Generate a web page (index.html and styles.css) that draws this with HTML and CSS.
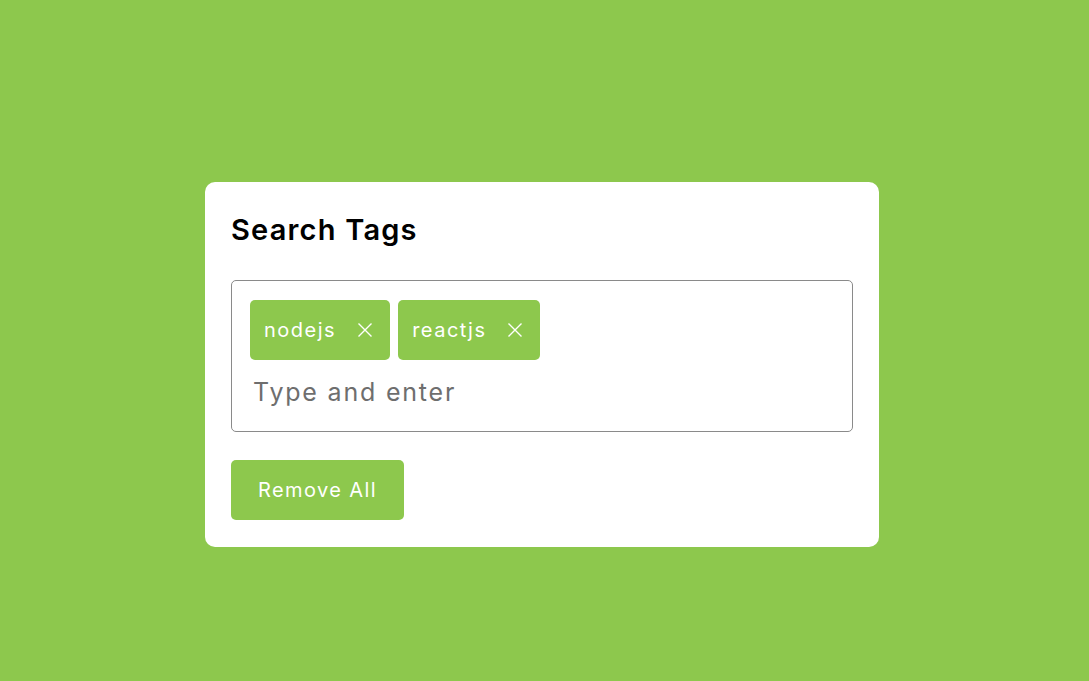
FILE: index.html
```html
<!DOCTYPE html>
<html>
<head>
<meta charset="utf-8">
<link rel="stylesheet" href="styles.css">
</head>
<body>
<div class="card">
  <h2 class="title">Search Tags</h2>
  <div class="tag-box">
    <ul class="tags">
      <li class="tag"><span>nodejs</span><svg class="x" viewBox="0 0 16 16"><path d="M1.5 1.5L14.5 14.5M14.5 1.5L1.5 14.5"/></svg></li>
      <li class="tag"><span>reactjs</span><svg class="x" viewBox="0 0 16 16"><path d="M1.5 1.5L14.5 14.5M14.5 1.5L1.5 14.5"/></svg></li>
    </ul>
    <input class="entry" type="text" placeholder="Type and enter">
  </div>
  <button class="btn">Remove All</button>
</div>
</body>
</html>
```
FILE: styles.css
```css
* { box-sizing: border-box; }
html, body { margin: 0; height: 100%; }
body {
  background: #8dc84d;
  font-family: Inter, "Open Sans", sans-serif;
  display: flex;
  justify-content: center;
  align-items: flex-start;
  padding-top: 182px;
  padding-right: 5px;
}
.card {
  width: 674px;
  background: #fff;
  border-radius: 10px;
  padding: 26px 26px 27px;
}
.title {
  margin: 0;
  font-size: 29px;
  font-weight: 600;
  color: #000;
  line-height: 44px;
  letter-spacing: 1.2px;
}
.tag-box {
  margin-top: 28px;
  border: 1px solid #8a8a8a;
  border-radius: 5px;
  padding: 19px 18px 18px;
  height: 152px;
}
.tags {
  list-style: none;
  margin: 0;
  padding: 0;
  display: flex;
  gap: 8px;
}
.tag {
  background: #8dc84d;
  color: #fff;
  height: 60px;
  border-radius: 5px;
  display: flex;
  align-items: center;
  padding: 0 17px 0 14px;
  font-size: 20px;
  letter-spacing: 1.5px;
}
.tag span { margin-right: 21px; }
.x {
  width: 16px;
  height: 16px;
  stroke: #fff;
  stroke-width: 1.4;
  fill: none;
}
.entry {
  display: block;
  margin-top: 12px;
  border: none;
  outline: none;
  padding: 0 0 0 3px;
  font-family: inherit;
  font-size: 25px;
  letter-spacing: 1.8px;
  height: 40px;
  width: 100%;
  color: #333;
}
.entry::placeholder { color: #6e6e6e; }
.btn {
  margin-top: 28px;
  display: block;
  width: 173px;
  height: 60px;
  border: none;
  border-radius: 5px;
  background: #8dc84d;
  color: #fff;
  font-family: inherit;
  font-size: 20px;
  font-weight: 400;
  letter-spacing: 1.4px;
}
```
